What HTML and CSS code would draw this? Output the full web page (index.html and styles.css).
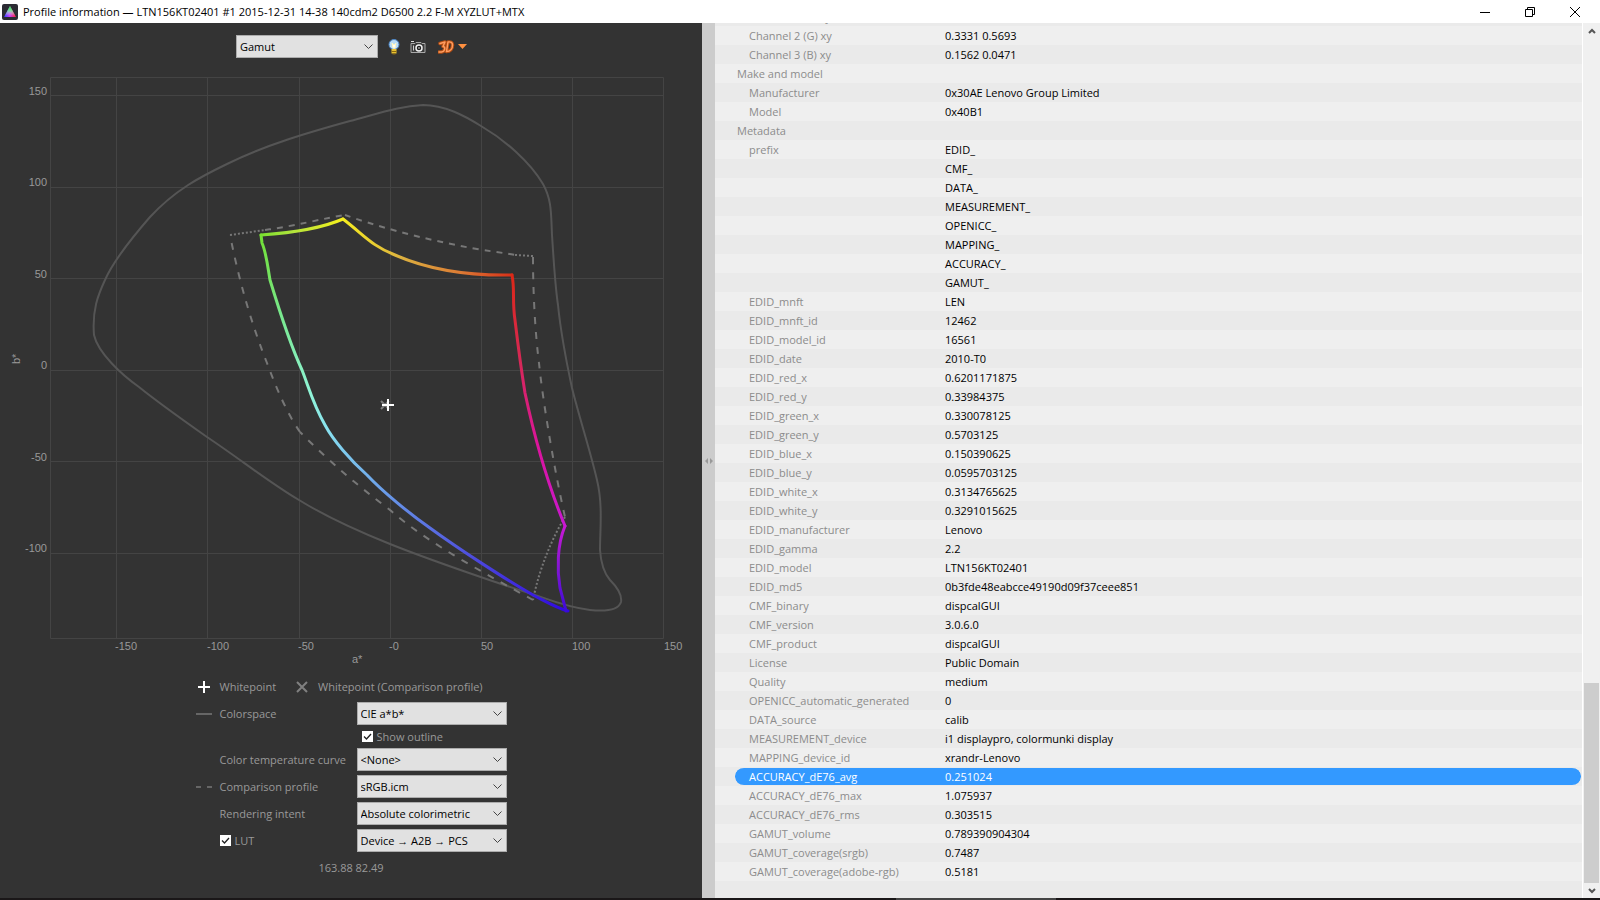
FILE: index.html
```html
<!DOCTYPE html>
<html lang="en">
<head>
  <meta charset="UTF-8">
  <title>Profile information</title>
  <link rel="stylesheet" href="styles.css">
</head>
<body>
  <header class="titlebar">
    <svg class="app-icon" viewBox="0 0 16 16">
      <defs>
        <linearGradient id="rb" x1="0" x2="1"><stop offset="0" stop-color="#2a3cff"/><stop offset=".45" stop-color="#c040ff"/><stop offset="1" stop-color="#ff2038"/></linearGradient>
        <linearGradient id="g" x1="0" y1="0" x2="0" y2="1"><stop offset="0" stop-color="#28e83c"/><stop offset=".4" stop-color="#70f090" stop-opacity=".9"/><stop offset=".9" stop-color="#fff" stop-opacity="0"/></linearGradient>
      </defs>
      <rect width="16" height="16" rx="2" fill="#2b2b33"/>
      <path d="M8 2L14 13H2Z" fill="url(#rb)"/>
      <path d="M8 2L14 13H2Z" fill="url(#g)"/>
    </svg>
    <h1>Profile information — LTN156KT02401 #1 2015-12-31 14-38 140cdm2 D6500 2.2 F-M XYZLUT+MTX</h1>
    <div class="window-buttons">
      <button type="button" aria-label="Minimize"><svg viewBox="0 0 12 12"><path d="M1 6.5h10"/></svg></button>
      <button type="button" aria-label="Restore"><svg viewBox="0 0 12 12"><path d="M1.5 3.5h7v7h-7zM3.5 3.5v-2h7v7h-2"/></svg></button>
      <button type="button" aria-label="Close"><svg viewBox="0 0 12 12"><path d="M1 1l10 10M11 1L1 11"/></svg></button>
    </div>
  </header>

  <main class="content">
    <section class="graph-panel">
      <div class="toolbar">
        <select class="graph-type" aria-label="Graph type"><option>Gamut</option></select>
        <button type="button" class="bulb" aria-label="Toggle tooltip">
          <svg viewBox="0 0 12 16"><circle cx="6" cy="5.5" r="5" fill="#b9dcf5" stroke="#4b86c8"/><path d="M4 4l1 5h2l1-5-2 2z" fill="#fff" stroke="#fff8c0"/><path d="M3.500 10h5v4.500h-5z" fill="#e8c030"/><path d="M3.500 12.500h5M4.500 15h3" stroke="#8a6a10"/></svg>
        </button>
        <button type="button" class="camera" aria-label="Save image">
          <svg viewBox="0 0 16 14"><path d="M1 3.500h4l1-1h5l1 1h3v9H1z" fill="#3a3a3a" stroke="#aaa"/><path d="M1 1.500h3" stroke="#ddd"/><circle cx="9" cy="8" r="3" fill="#222" stroke="#f2f2f2" stroke-width="1.500"/><circle cx="9" cy="8" r="1" fill="#999"/><path d="M3.500 5.500v5" stroke="#ccc"/></svg>
        </button>
        <button type="button" class="view3d" aria-label="View 3D">
          <svg viewBox="0 0 30 16"><g fill="none" stroke-linejoin="round" stroke-linecap="round"><path d="M2 4.500l5-1.500-2 4.500c3 0 2 5-1.500 5.500H1M10 3l-1.500 9.500c4 0 6-3 6-6.500 0-2.500-1.500-3.500-4.500-3z" stroke="#b34d12" stroke-width="3.500"/><path d="M2 4.500l5-1.500-2 4.500c3 0 2 5-1.500 5.500H1M10 3l-1.500 9.500c4 0 6-3 6-6.500 0-2.500-1.500-3.500-4.500-3z" stroke="#ff9d60" stroke-width="1.500"/></g><path d="M20 5h9l-4.500 5z" fill="#ff9040"/></svg>
        </button>
      </div>

      <svg class="chart" viewBox="0 70 702 600">
        <defs>
          <linearGradient id="greenYellow" gradientUnits="userSpaceOnUse" x1="261" y1="0" x2="343" y2="0"><stop offset="0" stop-color="#7be030"/><stop offset=".4" stop-color="#b4e43c"/><stop offset="1" stop-color="#f6f01c"/></linearGradient>
          <linearGradient id="yellowRed" gradientUnits="userSpaceOnUse" x1="343" y1="0" x2="512" y2="0"><stop offset="0" stop-color="#f6ee20"/><stop offset=".35" stop-color="#dcb040"/><stop offset=".7" stop-color="#dc7a34"/><stop offset="1" stop-color="#d83018"/></linearGradient>
          <linearGradient id="redMagenta" gradientUnits="userSpaceOnUse" x1="0" y1="276" x2="0" y2="525"><stop offset="0" stop-color="#dc2818"/><stop offset=".35" stop-color="#d62858"/><stop offset=".7" stop-color="#dc14a0"/><stop offset="1" stop-color="#c818d0"/></linearGradient>
          <linearGradient id="magentaBlue" gradientUnits="userSpaceOnUse" x1="0" y1="525" x2="0" y2="611"><stop offset="0" stop-color="#cc18d4"/><stop offset=".5" stop-color="#8416d4"/><stop offset="1" stop-color="#3c0ad8"/></linearGradient>
          <linearGradient id="blueGreen" gradientUnits="userSpaceOnUse" x1="568" y1="611" x2="261" y2="235"><stop offset="0" stop-color="#3008e0"/><stop offset=".2" stop-color="#4c48dc"/><stop offset=".42" stop-color="#6898e8"/><stop offset=".6" stop-color="#88e0f0"/><stop offset=".68" stop-color="#90f4d8"/><stop offset=".85" stop-color="#78e88c"/><stop offset="1" stop-color="#72e034"/></linearGradient>
        </defs>

        <g class="grid">
          <path d="M50.500 77.500H663.500V638.500H50.500Z"/>
          <path d="M116.500 77V638M207.500 77V638M299.500 77V638M390.500 77V638M481.500 77V638M572.500 77V638"/>
          <path d="M50 95.500H664M50 187.500H664M50 278.500H664M50 370.500H664M50 461.500H664M50 553.500H664"/>
        </g>

        <g class="axis-label" text-anchor="end">
          <text x="47" y="95">150</text>
          <text x="47" y="186">100</text>
          <text x="47" y="278">50</text>
          <text x="47" y="369">0</text>
          <text x="47" y="461">-50</text>
          <text x="47" y="552">-100</text>
        </g>
        <g class="axis-label">
          <text x="115" y="650">-150</text>
          <text x="207" y="650">-100</text>
          <text x="298" y="650">-50</text>
          <text x="389" y="650">-0</text>
          <text x="481" y="650">50</text>
          <text x="572" y="650">100</text>
          <text x="664" y="650">150</text>
          <text x="352" y="663">a*</text>
          <text transform="translate(20 364) rotate(-90)">b*</text>
        </g>

        <!-- spectral locus -->
        <path class="locus" d="M94 335C92 310 98 295 105 280C112 264 130 240 150 217C175 190 200 177 227 164C265 145 310 132 350 121C380 113 400 106 423 105C445 105 465 116 481 126C505 140 530 162 543 184C552 200 551 215 552 235C554 265 555 285 558 305C561 335 566 360 572 388C580 420 590 450 597 480C603 505 600 530 600 550C601 565 604 573 610 580C620 590 622 596 621 602C618 612 600 611 590 610C565 607 545 598 532 594C500 584 430 560 390 544C350 528 325 516 299 500C270 483 240 459 207 437C180 418 155 400 139 387C122 375 98 353 94 335Z"/>

        <!-- comparison profile -->
        <path class="compare dots" d="M230 235L265 230"/>
        <path class="compare" d="M265 230C295 226 325 218 345 215"/>
        <path class="compare" d="M345 215C370 224 420 239 477 249C495 252 505 253 515 255"/>
        <path class="compare dots" d="M515 255L533 256"/>
        <path class="compare long" d="M533 257C533 300 536 340 539 363C543 403 555 473 565 517"/>
        <path class="compare dots" d="M565 517C554 535 540 565 533 600"/>
        <path class="compare long" d="M533 600C490 576 430 545 390 510C357 485 333 465 300 432"/>
        <path class="compare long" d="M300 432C288 415 277 390 267 363C252 325 240 285 230 235"/>

        <!-- display gamut -->
        <g class="gamut">
          <path stroke="url(#blueGreen)" d="M568 611C556 608 545 601 533 595C510 582 460 550 430 528C410 514 383 492 367 475C350 460 333 440 325 425C313 404 309 388 302 370C289 342 277 303 270 280C267 262 266 252 262 243L261 235"/>
          <path stroke="url(#greenYellow)" d="M261 235C290 233 320 229 343 219"/>
          <path stroke="url(#yellowRed)" d="M343 219C365 236 372 246 395 255C425 268 460 276 512 275"/>
          <path stroke="url(#redMagenta)" d="M512 275C515 290 512 300 515 320C518 345 520 362 525 393C534 435 548 485 565 526"/>
          <path stroke="url(#magentaBlue)" d="M565 526C557 545 557 570 560 588L566 611"/>
        </g>

        <path class="cross-compare" d="M381 401l8 8M389 401l-8 8"/>
        <path class="cross" d="M382 405h12M388 399v12"/>
      </svg>

      <form class="options">
        <div class="legend">
          <svg class="mark" viewBox="0 0 16 16"><path class="cross" d="M2 8h12M8 2v12"/></svg>
          <span>Whitepoint</span>
          <svg class="mark" viewBox="0 0 16 16"><path class="cross-compare" d="M3 3l10 10M13 3L3 13"/></svg>
          <span>Whitepoint (Comparison profile)</span>
        </div>
        <svg class="mark" viewBox="0 0 16 16"><path class="line" d="M0 8h16"/></svg>
        <label for="colorspace">Colorspace</label>
        <select id="colorspace"><option>CIE a*b*</option></select>

        <label class="check outline"><input type="checkbox" checked>Show outline</label>

        <label class="second" for="curve">Color temperature curve</label>
        <select id="curve"><option>&lt;None&gt;</option></select>

        <svg class="mark" viewBox="0 0 16 16"><path class="line" d="M0 8h5M11 8h5"/></svg>
        <label for="profile">Comparison profile</label>
        <select id="profile"><option>sRGB.icm</option></select>

        <label class="second" for="intent">Rendering intent</label>
        <select id="intent"><option>Absolute colorimetric</option></select>

        <label class="check second"><input type="checkbox" checked>LUT</label>
        <select aria-label="LUT direction"><option>Device → A2B → PCS</option></select>
      </form>
      <p class="readout">163.88 82.49</p>
    </section>

    <div class="splitter">
      <svg viewBox="0 0 8 6"><path d="M3 0v6L0 3zM5 0v6l3-3z"/></svg>
    </div>

    <section class="info">
      <table>
        <tr><td>Channel 1 (R) xy</td><td></td></tr>
        <tr><td>Channel 2 (G) xy</td><td>0.3331 0.5693</td></tr>
        <tr><td>Channel 3 (B) xy</td><td>0.1562 0.0471</td></tr>
        <tr class="group"><td>Make and model</td><td></td></tr>
        <tr><td>Manufacturer</td><td>0x30AE Lenovo Group Limited</td></tr>
        <tr><td>Model</td><td>0x40B1</td></tr>
        <tr class="group"><td>Metadata</td><td></td></tr>
        <tr><td>prefix</td><td>EDID_</td></tr>
        <tr><td></td><td>CMF_</td></tr>
        <tr><td></td><td>DATA_</td></tr>
        <tr><td></td><td>MEASUREMENT_</td></tr>
        <tr><td></td><td>OPENICC_</td></tr>
        <tr><td></td><td>MAPPING_</td></tr>
        <tr><td></td><td>ACCURACY_</td></tr>
        <tr><td></td><td>GAMUT_</td></tr>
        <tr><td>EDID_mnft</td><td>LEN</td></tr>
        <tr><td>EDID_mnft_id</td><td>12462</td></tr>
        <tr><td>EDID_model_id</td><td>16561</td></tr>
        <tr><td>EDID_date</td><td>2010-T0</td></tr>
        <tr><td>EDID_red_x</td><td>0.6201171875</td></tr>
        <tr><td>EDID_red_y</td><td>0.33984375</td></tr>
        <tr><td>EDID_green_x</td><td>0.330078125</td></tr>
        <tr><td>EDID_green_y</td><td>0.5703125</td></tr>
        <tr><td>EDID_blue_x</td><td>0.150390625</td></tr>
        <tr><td>EDID_blue_y</td><td>0.0595703125</td></tr>
        <tr><td>EDID_white_x</td><td>0.3134765625</td></tr>
        <tr><td>EDID_white_y</td><td>0.3291015625</td></tr>
        <tr><td>EDID_manufacturer</td><td>Lenovo</td></tr>
        <tr><td>EDID_gamma</td><td>2.2</td></tr>
        <tr><td>EDID_model</td><td>LTN156KT02401</td></tr>
        <tr><td>EDID_md5</td><td>0b3fde48eabcce49190d09f37ceee851</td></tr>
        <tr><td>CMF_binary</td><td>dispcalGUI</td></tr>
        <tr><td>CMF_version</td><td>3.0.6.0</td></tr>
        <tr><td>CMF_product</td><td>dispcalGUI</td></tr>
        <tr><td>License</td><td>Public Domain</td></tr>
        <tr><td>Quality</td><td>medium</td></tr>
        <tr><td>OPENICC_automatic_generated</td><td>0</td></tr>
        <tr><td>DATA_source</td><td>calib</td></tr>
        <tr><td>MEASUREMENT_device</td><td>i1 displaypro, colormunki display</td></tr>
        <tr><td>MAPPING_device_id</td><td>xrandr-Lenovo</td></tr>
        <tr class="selected"><td>ACCURACY_dE76_avg</td><td>0.251024</td></tr>
        <tr><td>ACCURACY_dE76_max</td><td>1.075937</td></tr>
        <tr><td>ACCURACY_dE76_rms</td><td>0.303515</td></tr>
        <tr><td>GAMUT_volume</td><td>0.789390904304</td></tr>
        <tr><td>GAMUT_coverage(srgb)</td><td>0.7487</td></tr>
        <tr><td>GAMUT_coverage(adobe-rgb)</td><td>0.5181</td></tr>
      </table>
    </section>

    <div class="scrollbar">
      <button type="button" aria-label="Scroll up"><svg viewBox="0 0 8 6"><path d="M1 5l3-3 3 3"/></svg></button>
      <div class="track"><div class="thumb"></div></div>
      <button type="button" aria-label="Scroll down"><svg viewBox="0 0 8 6"><path d="M1 1l3 3 3-3"/></svg></button>
    </div>
  </main>
  <footer class="edge"><span></span></footer>
</body>
</html>
```
FILE: styles.css
```css
* {
  box-sizing: border-box;
}

body {
  margin: 0;
  height: 100vh;
  display: flex;
  flex-direction: column;
  overflow: hidden;
  font-family: "Open Sans", "Noto Sans", sans-serif;
  font-size: 11px;
  line-height: 19px;
  background: #fff;
}

button {
  padding: 0;
  border: none;
  background: none;
  display: flex;
  align-items: center;
  justify-content: center;
}

/* title bar */
.titlebar {
  flex: 0 0 23px;
  display: flex;
  align-items: center;
  padding: 0 3px 0 2px;
}

.app-icon {
  width: 16px;
  height: 16px;
}

.titlebar h1 {
  flex: 1;
  margin: 0 0 0 5px;
  font-size: 11px;
  font-weight: normal;
  color: #000;
}

.window-buttons {
  display: flex;
}

.window-buttons button {
  width: 45px;
  height: 20px;
}

.window-buttons svg {
  width: 12px;
  height: 12px;
  fill: none;
  stroke: #000;
}

.content {
  flex: 1;
  min-height: 0;
  display: grid;
  grid-template-columns: 702fr 13px 868fr 17px;
  grid-template-rows: minmax(0, 1fr);
}

/* graph side */
.graph-panel {
  background: #333;
  color: #999;
  overflow: hidden;
}

.toolbar {
  height: 47px;
  padding-left: 2px;
  display: flex;
  justify-content: center;
  align-items: center;
}

.toolbar svg {
  display: block;
  height: 16px;
}

.toolbar .camera svg {
  height: 14px;
}

.bulb {
  margin-left: 10px;
}

.camera {
  margin-left: 10px;
}

.view3d {
  margin-left: 12px;
}

select {
  appearance: none;
  width: 150px;
  height: 23px;
  padding: 0 20px 0 3px;
  border: 1px solid #acacac;
  border-radius: 0;
  font: inherit;
  color: #000;
  background: #e1e1e1 url("data:image/svg+xml,%3Csvg xmlns='http://www.w3.org/2000/svg' width='9' height='6'%3E%3Cpath d='M.5.5l4 4 4-4' fill='none' stroke='%23444'/%3E%3C/svg%3E") no-repeat right 4px center;
}

.graph-type {
  width: 142px;
}

.chart {
  display: block;
  width: 100%;
}

.grid path {
  fill: none;
  stroke: #444;
}

.axis-label {
  font-family: "Liberation Sans", Arial, sans-serif;
  font-size: 11px;
  fill: #999;
}

.locus {
  fill: none;
  stroke: #555;
  stroke-width: 2;
}

.compare {
  fill: none;
  stroke: #777;
  stroke-width: 2;
  stroke-dasharray: 6 6;
}

.compare.long {
  stroke-dasharray: 7 8;
}

.compare.dots {
  stroke-dasharray: 2 2;
}

.gamut path {
  fill: none;
  stroke-width: 3;
  stroke-linecap: round;
}

.cross {
  stroke: #fff;
  stroke-width: 2;
}

.cross-compare {
  stroke: #808080;
  stroke-width: 2;
}

.line {
  stroke: #666;
  stroke-width: 2;
}

.options {
  margin-top: 5px;
  display: grid;
  grid-template-columns: 16px 129px 150px;
  justify-content: center;
  align-items: center;
  gap: 4px 8px;
}

.mark {
  width: 16px;
  height: 16px;
}

.legend {
  grid-column: 1 / -1;
  height: 23px;
  display: flex;
  align-items: center;
  gap: 8px;
}

.legend span + .mark {
  margin-left: 10px;
}

.options label {
  white-space: nowrap;
}

.options select {
  grid-column: 3;
}

.second {
  grid-column: 2;
}

.check {
  display: flex;
  align-items: center;
  gap: 4px;
}

.outline {
  grid-column: 3;
  height: 15px;
  padding-left: 5px;
}

.check input {
  appearance: none;
  width: 11px;
  height: 11px;
  margin: 0;
  background: #fff url("data:image/svg+xml,%3Csvg xmlns='http://www.w3.org/2000/svg' width='11' height='11'%3E%3Cpath d='M2 5.500l2.500 2.500L9 3' fill='none' stroke='%23222' stroke-width='1.300'/%3E%3C/svg%3E") no-repeat;
}

.readout {
  margin: 6px 0 0;
  text-align: center;
}

.splitter {
  background: #ccc;
  display: flex;
  align-items: center;
  justify-content: center;
}

.splitter svg {
  width: 8px;
  height: 6px;
  fill: #999;
}

/* profile data */
.info {
  overflow: hidden;
  padding: 0 1px 0 20px;
  border-right: 1px solid #fff;
  background: repeating-linear-gradient(#eaeaea 0 19px, #efefef 19px 38px) 0 -16px / 100% 950px;
}

.info table {
  width: 100%;
  margin-top: -16px;
  table-layout: fixed;
  border-spacing: 0;
}

.info td {
  height: 19px;
  padding: 0;
  line-height: 17px;
  color: #000;
  white-space: nowrap;
}

.info td:first-child {
  width: 210px;
  padding-left: 14px;
  color: #8c8c8c;
}

.info .group td:first-child {
  padding-left: 2px;
}

.info .selected td {
  color: #fff;
  background: #39f;
  border: solid transparent;
  border-width: 1px 0;
  background-clip: padding-box;
}

.info .selected td:first-child {
  color: #fff;
  border-radius: 9px 0 0 9px;
}

.info .selected td:last-child {
  border-radius: 0 9px 9px 0;
}

.scrollbar {
  display: flex;
  flex-direction: column;
  padding: 0 1px;
  background: #f0f0f0;
}

.scrollbar button {
  flex: 0 0 15px;
}

.scrollbar svg {
  width: 8px;
  height: 6px;
  fill: none;
  stroke: #555;
  stroke-width: 2;
}

.track {
  flex: 1;
  display: flex;
  flex-direction: column;
  justify-content: flex-end;
}

.thumb {
  height: 200px;
  background: #cdcdcd;
}

.edge {
  flex: 0 0 2px;
  background: #1a1718;
}

.edge span {
  display: block;
  width: 10%;
  height: 2px;
  margin-left: 56%;
  background: #444;
}
```
